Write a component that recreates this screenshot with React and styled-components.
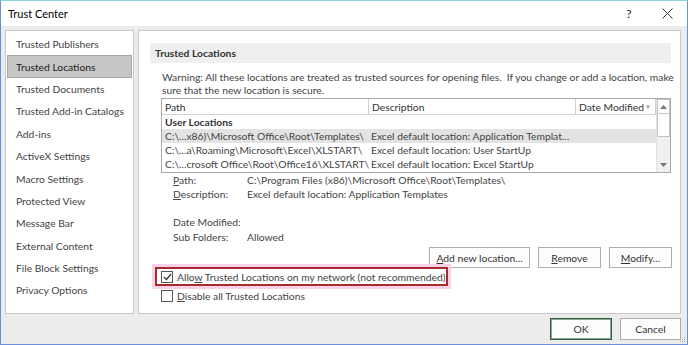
import React from 'react';
import styled, { createGlobalStyle } from 'styled-components';

const GlobalStyle = createGlobalStyle`
    html, body {
        margin: 0;
        padding: 0;
        background: #ffffff;
    }
    body {
        font-family: Lato, "Noto Sans", sans-serif;
        font-size: 10.3px;
        color: #444444;
    }
`;

const Window = styled.div`
    width: 688px;
    height: 345px;
    box-sizing: border-box;
    border: 1px solid #6d8ed6;
    border-top-color: #8fd3e6;
    background: #ececec;
    display: flex;
    flex-direction: column;
`;

const TitleBar = styled.div`
    height: 25px;
    background: #ffffff;
    display: flex;
    align-items: center;
    padding-left: 7px;
    color: #000000;
    font-size: 11px;
`;

const Title = styled.div`
    flex: 1;
`;

const TitleButton = styled.div`
    width: ${p => p.$w}px;
    display: flex;
    justify-content: center;
    align-items: center;
    font-size: 12px;
    color: #222;
`;

const Body = styled.div`
    display: flex;
    gap: 4px;
    padding: 4px 6px 0 4px;
`;

const Nav = styled.div`
    width: 129px;
    height: 284px;
    box-sizing: border-box;
    background: #ffffff;
    border: 1px solid #c9c9c9;
    padding-top: 2px;
`;

const NavItem = styled.div`
    height: 22.4px;
    box-sizing: border-box;
    margin: 0 1px;
    padding-left: 8px;
    display: flex;
    align-items: center;
    white-space: nowrap;
    border: 1px solid ${p => (p.$active ? '#a6a6a6' : 'transparent')};
    background: ${p => (p.$active ? '#c6c6c6' : 'transparent')};
    color: ${p => (p.$active ? '#222' : '#444')};
`;

const Content = styled.div`
    width: 543px;
    height: 284px;
    box-sizing: border-box;
    background: #ffffff;
    border: 1px solid #c9c9c9;
    padding: 12px 9px 0 11px;
    display: flex;
    flex-direction: column;
`;

const SectionHeader = styled.div`
    height: 20px;
    background: #efefef;
    font-weight: bold;
    color: #333;
    display: flex;
    align-items: center;
    padding-left: 5px;
`;

const Warning = styled.div`
    margin: 8px 0 0 12px;
    line-height: 12.5px;
    white-space: nowrap;
`;

const Table = styled.div`
    margin: 2px 0 0 11px;
    width: 510px;
    height: 75px;
    box-sizing: border-box;
    border: 1px solid #a9a9a9;
    display: flex;
`;

const List = styled.div`
    flex: 1;
    display: flex;
    flex-direction: column;
`;

const HeaderRow = styled.div`
    display: flex;
    height: 15px;
    border-bottom: 1px solid #d0d0d0;
`;

const HeaderCell = styled.div`
    width: ${p => p.$w}px;
    box-sizing: border-box;
    padding-left: 3px;
    border-right: 1px solid #d0d0d0;
    display: flex;
    align-items: center;
    justify-content: space-between;
    white-space: nowrap;
    color: #333;
`;

const SortArrow = styled.span`
    margin-right: 4px;
    font-size: 6px;
    color: #999;
`;

const GroupRow = styled.div`
    height: 14px;
    padding-left: 3px;
    display: flex;
    align-items: center;
    font-weight: bold;
    color: #333;
`;

const Row = styled.div`
    height: 14px;
    display: flex;
    align-items: center;
    background: ${p => (p.$selected ? '#e3e3e3' : 'transparent')};
    white-space: nowrap;
`;

const Cell = styled.div`
    width: ${p => p.$w}px;
    padding-left: ${p => p.$pad}px;
    box-sizing: border-box;
    overflow: hidden;
`;

const ScrollBar = styled.div`
    width: 15px;
    background: #f0f0f0;
    border-left: 1px solid #e2e2e2;
    display: flex;
    flex-direction: column;
`;

const ScrollArrow = styled.div`
    height: 15px;
    display: flex;
    align-items: center;
    justify-content: center;
    background: ${p => (p.$boxed ? '#ffffff' : 'transparent')};
    border: 1px solid ${p => (p.$boxed ? '#c4c4c4' : 'transparent')};
    box-sizing: border-box;
`;

const Thumb = styled.div`
    height: 23px;
    background: #ffffff;
    border: 1px solid #c4c4c4;
    border-top: none;
    box-sizing: border-box;
`;

const Track = styled.div`
    flex: 1;
`;

const Details = styled.div`
    margin: 0 0 0 23px;
    display: grid;
    grid-template-columns: 74px 1fr;
    grid-template-rows: 14px 14px 14px 14px 16px;
    align-items: center;
    white-space: nowrap;
`;

const ButtonRow = styled.div`
    display: flex;
    justify-content: flex-end;
    gap: 8px;
    margin: 2px -1px 0 0;
`;

const Button = styled.button`
    width: ${p => p.$w}px;
    height: ${p => p.$h || 21}px;
    box-sizing: border-box;
    background: #fdfdfd;
    border: 1px solid ${p => (p.$default ? '#2f5b3e' : '#adadad')};
    box-shadow: ${p => (p.$default ? 'inset 0 0 0 1px #8aa995' : 'none')};
    font-family: inherit;
    font-size: 10.3px;
    color: #333;
    padding: 0;
`;

const CheckRow = styled.div`
    display: flex;
    align-items: center;
    gap: 4px;
    height: ${p => (p.$flagged ? 19 : 17)}px;
    box-sizing: border-box;
    width: ${p => (p.$flagged ? '293px' : 'auto')};
    margin: ${p => (p.$flagged ? '-1px 0 0 5px' : '1px 0 0 11px')};
    padding-left: ${p => (p.$flagged ? 4 : 0)}px;
    border: ${p => (p.$flagged ? '2px solid #a62a30' : 'none')};
    box-shadow: ${p => (p.$flagged ? '0 0 0 3px #f8d3e8' : 'none')};
    white-space: nowrap;
`;

const Box = styled.span`
    width: 12px;
    height: 12px;
    box-sizing: border-box;
    border: 1px solid #555;
    background: #fff;
    display: inline-flex;
    align-items: center;
    justify-content: center;
    flex-shrink: 0;
`;

const Footer = styled.div`
    display: flex;
    justify-content: flex-end;
    gap: 8px;
    padding: 4px 6px 0 0;
    position: relative;
    flex: 1;
`;

const Grip = styled.svg`
    position: absolute;
    right: 1px;
    bottom: 1px;
`;

const navItems = [
  'Trusted Publishers',
  'Trusted Locations',
  'Trusted Documents',
  'Trusted Add-in Catalogs',
  'Add-ins',
  'ActiveX Settings',
  'Macro Settings',
  'Protected View',
  'Message Bar',
  'External Content',
  'File Block Settings',
  'Privacy Options',
];

const rows = [
  ['C:\\...x86)\\Microsoft Office\\Root\\Templates\\', 'Excel default location: Application Templat...'],
  ['C:\\...a\\Roaming\\Microsoft\\Excel\\XLSTART\\', 'Excel default location: User StartUp'],
  ['C:\\...crosoft Office\\Root\\Office16\\XLSTART\\', 'Excel default location: Excel StartUp'],
];

const Check = () => (
  <svg width="9" height="8" viewBox="0 0 9 8">
    <path d="M1 4 L3.5 6.5 L8 1" fill="none" stroke="#333" strokeWidth="1.2" />
  </svg>
);

const Arrow = ({ up }) => (
  <svg width="7" height="4" viewBox="0 0 7 4">
    <path d={up ? 'M0 4 L3.5 0 L7 4 Z' : 'M0 0 L3.5 4 L7 0 Z'} fill="#777" />
  </svg>
);

const App = () => {
  return (
    <>
      <GlobalStyle />
      <Window>
        <TitleBar>
          <Title>Trust Center</Title>
          <TitleButton $w={36}>?</TitleButton>
          <TitleButton $w={40}>
            <svg width="11" height="11" viewBox="0 0 11 11">
              <path d="M0.5 0.5 L10.5 10.5 M10.5 0.5 L0.5 10.5" stroke="#333" strokeWidth="1" />
            </svg>
          </TitleButton>
        </TitleBar>
        <Body>
          <Nav>
            {navItems.map(item => (
              <NavItem key={item} $active={item === 'Trusted Locations'}>{item}</NavItem>
            ))}
          </Nav>
          <Content>
            <SectionHeader>Trusted Locations</SectionHeader>
            <Warning>
              Warning: All these locations are treated as trusted sources for opening files.&nbsp; If you change or add a location, make
              <br />
              sure that the new location is secure.
            </Warning>
            <Table>
              <List>
                <HeaderRow>
                  <HeaderCell $w={207}>Path</HeaderCell>
                  <HeaderCell $w={207}>Description</HeaderCell>
                  <HeaderCell $w={80}>Date Modified <SortArrow>▼</SortArrow></HeaderCell>
                </HeaderRow>
                <GroupRow>User Locations</GroupRow>
                {rows.map((r, i) => (
                  <Row key={r[0]} $selected={i === 0}>
                    <Cell $w={207} $pad={3}>{r[0]}</Cell>
                    <Cell $w={280} $pad={2}>{r[1]}</Cell>
                  </Row>
                ))}
              </List>
              <ScrollBar>
                <ScrollArrow $boxed><Arrow up /></ScrollArrow>
                <Thumb />
                <Track />
                <ScrollArrow><Arrow /></ScrollArrow>
              </ScrollBar>
            </Table>
            <Details>
              <span><u>P</u>ath:</span>
              <span>C:\Program Files (x86)\Microsoft Office\Root\Templates\</span>
              <span><u>D</u>escription:</span>
              <span>Excel default location: Application Templates</span>
              <span />
              <span />
              <span>Date Modified:</span>
              <span />
              <span>Sub Folders:</span>
              <span>Allowed</span>
            </Details>
            <ButtonRow>
              <Button $w={101}><u>A</u>dd new location...</Button>
              <Button $w={63}><u>R</u>emove</Button>
              <Button $w={63}><u>M</u>odify...</Button>
            </ButtonRow>
            <CheckRow $flagged>
              <Box><Check /></Box>
              <span>Allo<u>w</u> Trusted Locations on my network (not recommended)</span>
            </CheckRow>
            <CheckRow>
              <Box />
              <span><u>D</u>isable all Trusted Locations</span>
            </CheckRow>
          </Content>
        </Body>
        <Footer>
          <Button $w={62} $h={22} $default>OK</Button>
          <Button $w={61} $h={22}>Cancel</Button>
          <Grip width="6" height="6" viewBox="0 0 6 6">
            <rect x="4" y="0" width="1" height="1" fill="#aaa" />
            <rect x="2" y="2" width="1" height="1" fill="#aaa" />
            <rect x="4" y="2" width="1" height="1" fill="#aaa" />
            <rect x="0" y="4" width="1" height="1" fill="#aaa" />
            <rect x="2" y="4" width="1" height="1" fill="#aaa" />
            <rect x="4" y="4" width="1" height="1" fill="#aaa" />
          </Grip>
        </Footer>
      </Window>
    </>
  );
};

export default App;
